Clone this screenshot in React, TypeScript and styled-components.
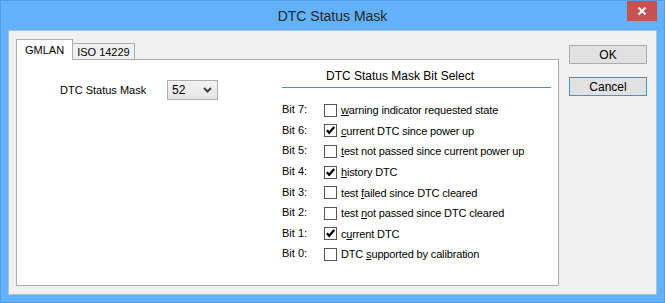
import styled, { createGlobalStyle } from 'styled-components';

const GlobalStyle = createGlobalStyle`
  html, body {
    margin: 0;
    padding: 0;
    overflow: hidden;
    background: #ffffff;
  }
  body {
    font-family: "Liberation Sans", Arial, sans-serif;
    font-size: 11px;
    color: #000;
  }
`;

interface Bit {
  n: number;
  before: string;
  key: string;
  after: string;
  checked: boolean;
}

const bits: Bit[] = [
  { n: 7, before: '', key: 'w', after: 'arning indicator requested state', checked: false },
  { n: 6, before: '', key: 'c', after: 'urrent DTC since power up', checked: true },
  { n: 5, before: '', key: 't', after: 'est not passed since current power up', checked: false },
  { n: 4, before: '', key: 'h', after: 'istory DTC', checked: true },
  { n: 3, before: 'test ', key: 'f', after: 'ailed since DTC cleared', checked: false },
  { n: 2, before: 'test ', key: 'n', after: 'ot passed since DTC cleared', checked: false },
  { n: 1, before: 'c', key: 'u', after: 'rrent DTC', checked: true },
  { n: 0, before: 'DTC ', key: 's', after: 'upported by calibration', checked: false },
];

export default function App() {
  return (
    <>
      <GlobalStyle />
      <Window>
        <TitleBar>
          <Title>DTC Status Mask</Title>
          <CloseButton aria-label="Close">
            <svg width="10" height="10" viewBox="0 0 10 10">
              <path d="M1.5 1.5 L8.5 8.5 M8.5 1.5 L1.5 8.5" stroke="#fff" strokeWidth="2" />
            </svg>
          </CloseButton>
        </TitleBar>

        <Client>
          <TabArea>
            <TabStrip>
              <Tab $active>GMLAN</Tab>
              <Tab>ISO 14229</Tab>
            </TabStrip>
            <Panel>
              <MaskGroup>
                <MaskLabel>DTC Status Mask</MaskLabel>
                <Select>
                  <span>52</span>
                  <svg width="9" height="6" viewBox="0 0 9 6">
                    <path d="M1 1 L4.5 4.5 L8 1" stroke="#404040" strokeWidth="2" fill="none" />
                  </svg>
                </Select>
              </MaskGroup>

              <BitGroup>
                <BitHeader>DTC Status Mask Bit Select</BitHeader>
                <BitList>
                  {bits.map((b) => (
                    <BitRow key={b.n}>
                      <BitLabel>Bit {b.n}:</BitLabel>
                      <CheckBox>
                        {b.checked && (
                          <svg width="11" height="11" viewBox="0 0 11 11">
                            <path d="M1.8 5.2 L4.2 7.8 L9.2 2" stroke="#000" strokeWidth="2.2" fill="none" />
                          </svg>
                        )}
                      </CheckBox>
                      <BitText>
                        {b.before}
                        <u>{b.key}</u>
                        {b.after}
                      </BitText>
                    </BitRow>
                  ))}
                </BitList>
              </BitGroup>
            </Panel>
          </TabArea>

          <ButtonColumn>
            <DialogButton>OK</DialogButton>
            <DialogButton $focused>Cancel</DialogButton>
          </ButtonColumn>
        </Client>
      </Window>
    </>
  );
}

const Window = styled.div`
  box-sizing: border-box;
  width: 665px;
  height: 303px;
  display: flex;
  flex-direction: column;
  background: #62b2fb;
  border: 1px solid #519ee6;
`;

const TitleBar = styled.div`
  position: relative;
  height: 29px;
  display: flex;
  align-items: center;
  justify-content: center;
`;

const Title = styled.div`
  font-size: 14px;
  color: #262626;
  margin-top: 1px;
`;

const CloseButton = styled.div`
  position: absolute;
  top: 0;
  right: 7px;
  width: 30px;
  height: 20px;
  background: #c75050;
  display: flex;
  align-items: center;
  justify-content: center;
`;

const Client = styled.div`
  flex: 1;
  margin: 0 7px 7px;
  box-sizing: border-box;
  border: 1px solid #a9c2da;
  background: #f0f0f0;
  display: flex;
  padding: 8px 0 8px 7px;
`;

const TabArea = styled.div`
  width: 543px;
  display: flex;
  flex-direction: column;
`;

const TabStrip = styled.div`
  display: flex;
  align-items: flex-end;
  height: 21px;
  margin-bottom: -1px;
  position: relative;
  z-index: 1;
`;

const Tab = styled.div<{ $active?: boolean }>`
  box-sizing: border-box;
  height: ${({ $active }) => ($active ? '21px' : '17px')};
  padding: 0 ${({ $active }) => ($active ? '8px' : '4px')};
  margin-left: ${({ $active }) => ($active ? '0' : '-1px')};
  border: 1px solid #acacac;
  border-bottom: ${({ $active }) => ($active ? 'none' : '1px solid #acacac')};
  background: ${({ $active }) => ($active ? '#ffffff' : '#f0f0f0')};
  position: relative;
  z-index: ${({ $active }) => ($active ? 2 : 1)};
  display: flex;
  align-items: center;
  padding-top: ${({ $active }) => ($active ? '0' : '1px')};
  font-size: 11px;
`;

const Panel = styled.div`
  flex: 1;
  box-sizing: border-box;
  border: 1px solid #acacac;
  background: #ffffff;
  display: flex;
`;

const MaskGroup = styled.div`
  display: flex;
  align-items: center;
  align-self: flex-start;
  padding: 20px 0 0 43px;
`;

const MaskLabel = styled.div`
  width: 107px;
  margin-top: -1px;
`;

const Select = styled.div`
  box-sizing: border-box;
  width: 51px;
  height: 20px;
  border: 1px solid #acacac;
  background: linear-gradient(#f2f2f2, #e5e5e5);
  display: flex;
  align-items: center;
  justify-content: space-between;
  padding: 0 5px 0 4px;
  font-size: 12px;
`;

const BitGroup = styled.div`
  margin-left: auto;
  margin-right: 7px;
  width: 269px;
  padding-top: 9px;
`;

const BitHeader = styled.div`
  font-size: 12px;
  line-height: 14px;
  padding: 0 0 4px 44px;
  border-bottom: 1px solid #3c91e6;
`;

const BitList = styled.div`
  margin-top: 12px;
  display: flex;
  flex-direction: column;
`;

const BitRow = styled.div`
  height: 20.6px;
  display: grid;
  grid-template-columns: 38px 13px auto;
  column-gap: 4px;
  align-items: center;
`;

const BitLabel = styled.span`
  margin-top: -2px;
`;

const CheckBox = styled.span`
  box-sizing: border-box;
  width: 13px;
  height: 13px;
  border: 1px solid #555555;
  background: #ffffff;
  display: flex;
  align-items: center;
  justify-content: center;
`;

const BitText = styled.span`
  letter-spacing: -0.15px;
  white-space: nowrap;
`;

const ButtonColumn = styled.div`
  display: flex;
  flex-direction: column;
  gap: 13px;
  margin-left: 10px;
  padding-top: 6px;
`;

const DialogButton = styled.div<{ $focused?: boolean }>`
  box-sizing: border-box;
  width: 78px;
  height: 19px;
  border: 1px solid ${({ $focused }) => ($focused ? '#3c95e4' : '#adadad')};
  background: #e1e1e1;
  display: flex;
  align-items: center;
  justify-content: center;
  font-size: 12px;
`;
